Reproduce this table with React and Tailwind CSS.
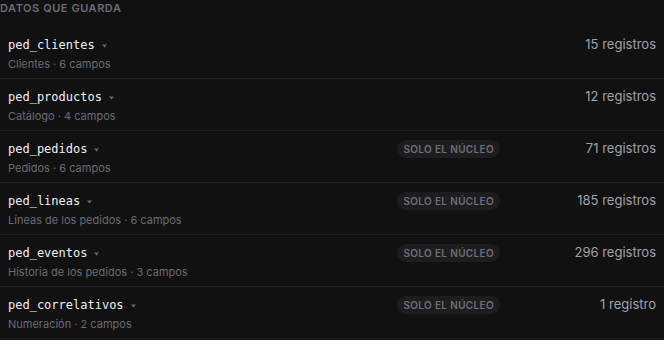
const tables = [
  { name: 'ped_clientes', desc: 'Clientes · 6 campos', count: '15 registros', core: false },
  { name: 'ped_productos', desc: 'Catálogo · 4 campos', count: '12 registros', core: false },
  { name: 'ped_pedidos', desc: 'Pedidos · 6 campos', count: '71 registros', core: true },
  { name: 'ped_lineas', desc: 'Líneas de los pedidos · 6 campos', count: '185 registros', core: true },
  { name: 'ped_eventos', desc: 'Historia de los pedidos · 3 campos', count: '296 registros', core: true },
  { name: 'ped_correlativos', desc: 'Numeración · 2 campos', count: '1 registro', core: true },
];

const Caret = () => (
  <svg width="5" height="4" viewBox="0 0 5 4" className="ml-[7px] mt-[2px]">
    <path d="M0 0.5h5L2.5 3.5z" fill="#6b6b73" />
  </svg>
);

const TableRow = ({ name, desc, count, core }) => (
  <div className="flex items-start border-b border-[#1f1f22] pl-2 pr-2 pt-2 pb-[6px]">
    <div className="flex-1 min-w-0">
      <div className="flex items-center h-5">
        <span className="font-['DejaVu_Sans_Mono',monospace] text-[12px] text-[#f0f0f2]">{name}</span>
        <Caret />
      </div>
      <div className="mt-[1px] text-[11px] leading-4 text-[#6b6b73]">{desc}</div>
    </div>
    {core && (
      <span className="mt-[1px] h-[18px] flex items-center rounded-full bg-[#1d1d20] px-[6px] text-[10px] font-semibold tracking-[0.035em] text-[#6e6e78]">
        SOLO EL NÚCLEO
      </span>
    )}
    <div className="w-[156px] h-5 flex items-center justify-end text-[13px] text-[#a1a1aa]">{count}</div>
  </div>
);

export default function App() {
  return (
    <div className="w-[664px] h-[340px] overflow-hidden bg-[#111112] font-['Inter',sans-serif]">
      <div className="h-[27px] pt-[1px] text-[11px] font-semibold tracking-[0.05em] text-[#6b6b73] leading-[14px]">
        DATOS QUE GUARDA
      </div>
      {tables.map((t) => (
        <TableRow key={t.name} {...t} />
      ))}
    </div>
  );
}
